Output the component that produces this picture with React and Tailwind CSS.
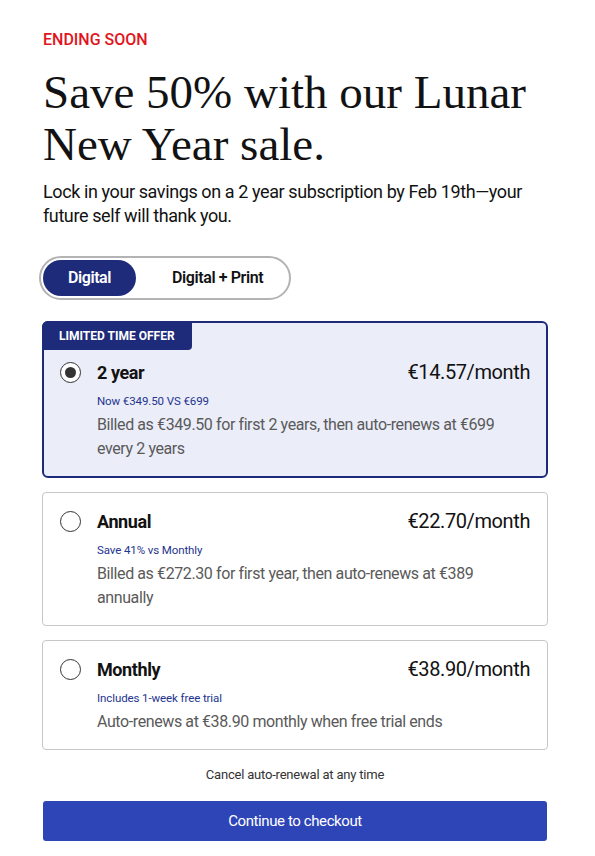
import { useState } from 'react';

const plans = [
  {
    id: 'two-year',
    name: '2 year',
    price: '€14.57/month',
    note: 'Now €349.50 VS €699',
    detail: 'Billed as €349.50 for first 2 years, then auto-renews at €699 every 2 years',
    badge: 'LIMITED TIME OFFER',
  },
  {
    id: 'annual',
    name: 'Annual',
    price: '€22.70/month',
    note: 'Save 41% vs Monthly',
    detail: 'Billed as €272.30 for first year, then auto-renews at €389 annually',
  },
  {
    id: 'monthly',
    name: 'Monthly',
    price: '€38.90/month',
    note: 'Includes 1-week free trial',
    detail: 'Auto-renews at €38.90 monthly when free trial ends',
  },
];

const sans = { fontFamily: 'Roboto, "Liberation Sans", sans-serif' };

const App = () => {
  const [tab, setTab] = useState('digital');
  const [selected, setSelected] = useState('two-year');

  return (
    <div
      className="min-h-screen bg-white pl-[43px] pr-[48px] pt-[28px] pb-4 tracking-[-0.4px] text-[#121212]"
      style={sans}
    >
      <div className="text-[16px] leading-[24px] font-medium tracking-normal text-[#e2141c]">ENDING SOON</div>

      <h1
        className="mt-[14px] text-[47px] leading-[52px] tracking-normal text-[#121212]"
        style={{ fontFamily: '"Liberation Serif", "DejaVu Serif", serif' }}
      >
        Save 50% with our Lunar New Year sale.
      </h1>

      <p className="mt-[10px] text-[18px] leading-[24px]">
        Lock in your savings on a 2 year subscription by Feb 19th—your future self will thank you.
      </p>

      {/* Tabs */}
      <div className="mt-[28px] -ml-[4px] inline-flex rounded-full border-2 border-[#b3b3b3] p-[2px]">
        <button
          onClick={() => setTab('digital')}
          className={`h-[36px] w-[93px] rounded-full text-[16px] font-semibold ${
            tab === 'digital' ? 'bg-[#1e2b7a] text-white' : 'text-[#121212]'
          }`}
        >
          Digital
        </button>
        <button
          onClick={() => setTab('print')}
          className={`h-[36px] rounded-full pl-[36px] pr-[24px] text-[16px] font-semibold ${
            tab === 'print' ? 'bg-[#1e2b7a] text-white' : 'text-[#121212]'
          }`}
        >
          Digital + Print
        </button>
      </div>

      {/* Plans */}
      <div className="mt-[21px] -mx-[1px] flex flex-col gap-[14px]">
        {plans.map((plan) => {
          const active = selected === plan.id;
          return (
            <div
              key={plan.id}
              onClick={() => setSelected(plan.id)}
              className={`relative cursor-pointer pb-[15px] ${
                active
                  ? 'rounded-[6px] border-2 border-[#1e2b7a] bg-[#ebedf9] px-[16px]'
                  : 'rounded-[4px] border border-[#c7c7c7] bg-white px-[17px]'
              } ${plan.badge ? 'pt-[37px]' : 'pt-4'}`}
            >
              {plan.badge && (
                <div className="absolute -top-[2px] -left-[2px] flex h-[29px] items-center rounded-tl-[6px] rounded-br-[4px] bg-[#1e2b7a] px-[17px] text-[12px] font-bold tracking-normal text-white">
                  {plan.badge}
                </div>
              )}
              <div className="flex items-start">
                <div className="flex h-[24px] w-[37px] shrink-0 items-center">
                  <span className="flex h-[21px] w-[21px] items-center justify-center rounded-full border-[1.5px] border-[#333] bg-white">
                    {active && <span className="h-[11px] w-[11px] rounded-full bg-[#333]"></span>}
                  </span>
                </div>
                <div className="min-w-0 flex-1">
                  <div className="flex h-[24px] items-center justify-between">
                    <span className="text-[18px] font-bold">{plan.name}</span>
                    <span className="text-[20px]">{plan.price}</span>
                  </div>
                  <div className="mt-[9px] text-[11.5px] leading-[16px] tracking-[-0.1px] text-[#23348f]">{plan.note}</div>
                  <div className="mt-1 pr-4 text-[16px] leading-[24px] text-[#5a5a5a]">{plan.detail}</div>
                </div>
              </div>
            </div>
          );
        })}
      </div>

      <div className="mt-[15px] text-center text-[13px] leading-[20px] tracking-[-0.2px] text-[#333]">
        Cancel auto-renewal at any time
      </div>

      <button className="mt-4 h-[40px] w-full rounded-[3px] bg-[#2e45b8] text-[15px] text-white">
        Continue to checkout
      </button>
    </div>
  );
};

export default App;
